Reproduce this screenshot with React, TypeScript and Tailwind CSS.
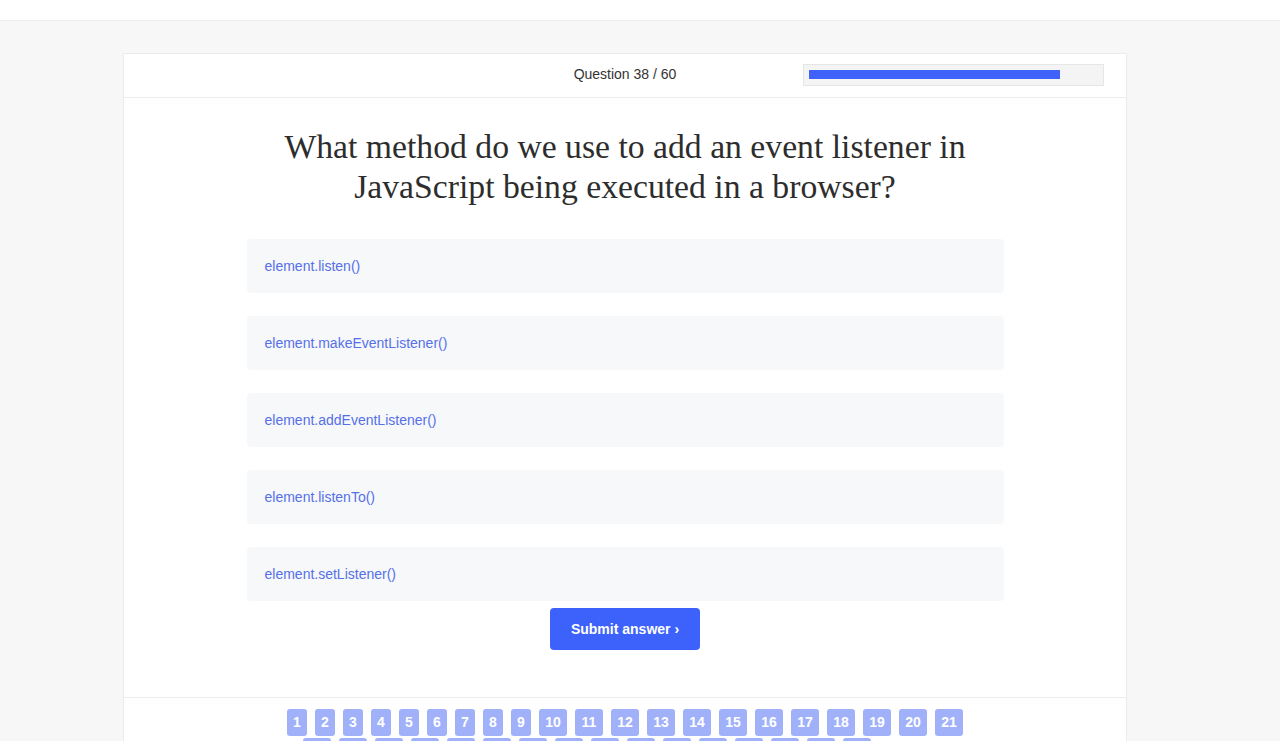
import React from 'react';

const options = [
  'element.listen()',
  'element.makeEventListener()',
  'element.addEventListener()',
  'element.listenTo()',
  'element.setListener()',
];

const current = 38;
const pages = Array.from({ length: 60 }, (_, i) => i + 1);

export default function App() {
  return (
    <div className="min-h-screen bg-[#f7f7f7] font-['Liberation_Sans',Arial,sans-serif]">
      {/* Top bar */}
      <div className="h-[21px] bg-white border-b border-[#ececec]" />

      <div className="pt-8 pl-[123px]">
        <div className="w-[1004px] bg-white border border-[#ebebeb]">
          {/* Card header */}
          <div className="grid grid-cols-3 h-11 items-center border-b border-[#ececec]">
            <div />
            <div className="text-center text-[14px] text-[#333] -mt-[2px]">Question 38 / 60</div>
            <div className="pl-[11px] -mt-[2px]">
              <div className="w-[301px] h-[22px] bg-[#f4f4f4] border border-[#e6e6e6] p-[5px]">
                <div className="h-[9px] w-[251px] bg-[#3f62fb]" />
              </div>
            </div>
          </div>

          {/* Question */}
          <div className="pt-[29px] pb-[47px]">
            <h1 className="text-center font-['Liberation_Serif','Times_New_Roman',serif] text-[33.7px] leading-[40px] text-[#2d2d2d] mb-8 px-[150px]">
              What method do we use to add an event listener in JavaScript being executed in a browser?
            </h1>

            <div className="mx-auto w-[757px]">
              {options.map((opt, i) => (
                <div
                  key={opt}
                  className={`h-[54px] flex items-center px-[18px] bg-[#f7f8fa] rounded-[4px] text-[14px] text-[#5570e8] cursor-pointer ${
                    i < options.length - 1 ? 'mb-[23px]' : 'mb-2'
                  }`}
                >
                  {opt}
                </div>
              ))}
            </div>

            <div className="flex justify-center">
              <button className="w-[150px] h-[42px] -mt-px rounded-[4px] bg-[#3d62fc] text-white text-[14px] font-bold">
                Submit answer ›
              </button>
            </div>
          </div>

          {/* Pager */}
          <div className="border-t border-[#ececec] pt-[11px] pb-4">
            <div className="mx-auto w-[678px] flex flex-wrap justify-center gap-x-2 gap-y-[2px]">
              {pages.map((n) => (
                <div
                  key={n}
                  className={`h-[27px] rounded-[3px] text-[14px] font-bold flex items-center justify-center ${
                    n === current ? 'w-[32px]' : n < 10 ? 'w-[20px]' : 'w-[28px]'
                  } ${n < current ? 'bg-[#a0b1fa] text-white' : 'bg-white text-[#a0b1fa]'}`}
                >
                  {n}
                </div>
              ))}
            </div>
          </div>
        </div>
      </div>
    </div>
  );
}
